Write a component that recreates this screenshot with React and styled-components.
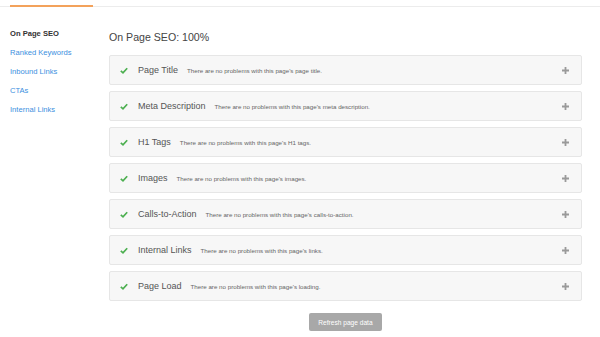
import React from 'react'
import styled, { createGlobalStyle } from 'styled-components'

const GlobalStyle = createGlobalStyle`
  body {
    margin: 0;
    background: #fff;
    font-family: "Liberation Sans", Arial, sans-serif;
  }
`

const TopBar = styled.div`
  display: flex;
  align-items: flex-end;
  height: 6px;
  padding-left: 10px;
  border-bottom: 1px solid #ececec;
`

const Tab = styled.div`
  width: 83px;
  height: 2px;
  margin-bottom: -1px;
  background: #f3a25b;
`

const Main = styled.div`
  display: flex;
`

const Sidebar = styled.nav`
  width: 109px;
  flex-shrink: 0;
  box-sizing: border-box;
  padding: 17px 0 0 10px;
  display: flex;
  flex-direction: column;
`

const NavItem = styled.a`
  font-size: 7.6px;
  line-height: 19px;
  color: ${(p) => (p.active ? '#333' : '#3b8fe0')};
  font-weight: ${(p) => (p.active ? 700 : 400)};
  text-decoration: none;
  white-space: nowrap;
`

const Content = styled.div`
  width: 473px;
  padding-top: 23px;
  display: flex;
  flex-direction: column;
`

const Title = styled.h1`
  margin: 0 0 11px;
  font-size: 10.6px;
  line-height: 14px;
  font-weight: 400;
  color: #444;
`

const List = styled.div`
  display: flex;
  flex-direction: column;
  gap: 6px;
`

const Card = styled.div`
  display: flex;
  align-items: center;
  height: 30px;
  box-sizing: border-box;
  padding: 0 12px 0 10px;
  background: #f7f7f7;
  border: 1px solid #e6e6e6;
  border-radius: 2px;
`

const Check = styled.svg`
  width: 8px;
  height: 7px;
  margin-right: 10px;
  flex-shrink: 0;
`

const Label = styled.span`
  font-size: 9px;
  color: #555;
  margin-right: 9px;
  white-space: nowrap;
`

const Desc = styled.span`
  font-size: 6.2px;
  color: #666;
  white-space: nowrap;
  flex: 1;
`

const Plus = styled.svg`
  width: 7px;
  height: 7px;
  flex-shrink: 0;
`

const ButtonRow = styled.div`
  display: flex;
  justify-content: center;
  margin-top: 12px;
`

const Button = styled.button`
  height: 18px;
  width: 73px;
  padding: 0;
  border: none;
  border-radius: 2px;
  background: #a8a8a8;
  color: #fff;
  font-family: inherit;
  font-size: 6.6px;
`

const checks = [
  ['Page Title', "There are no problems with this page's page title."],
  ['Meta Description', "There are no problems with this page's meta description."],
  ['H1 Tags', "There are no problems with this page's H1 tags."],
  ['Images', "There are no problems with this page's images."],
  ['Calls-to-Action', "There are no problems with this page's calls-to-action."],
  ['Internal Links', "There are no problems with this page's links."],
  ['Page Load', "There are no problems with this page's loading."]
]

const nav = ['On Page SEO', 'Ranked Keywords', 'Inbound Links', 'CTAs', 'Internal Links']

const App = () => (
  <>
    <GlobalStyle />
    <TopBar>
      <Tab />
    </TopBar>
    <Main>
      <Sidebar>
        {nav.map((n, i) => (
          <NavItem key={n} active={i === 0}>{n}</NavItem>
        ))}
      </Sidebar>
      <Content>
        <Title>On Page SEO: 100%</Title>
        <List>
          {checks.map(([label, desc]) => (
            <Card key={label}>
              <Check viewBox="0 0 8 7">
                <path d="M0.8 3.8 L3 5.8 L7.2 1.2" fill="none" stroke="#4caf50" strokeWidth="1.7" />
              </Check>
              <Label>{label}</Label>
              <Desc>{desc}</Desc>
              <Plus viewBox="0 0 7 7">
                <path d="M3.5 0 V7 M0 3.5 H7" stroke="#9a9a9a" strokeWidth="1.8" />
              </Plus>
            </Card>
          ))}
        </List>
        <ButtonRow>
          <Button>Refresh page data</Button>
        </ButtonRow>
      </Content>
    </Main>
  </>
)

export default App
